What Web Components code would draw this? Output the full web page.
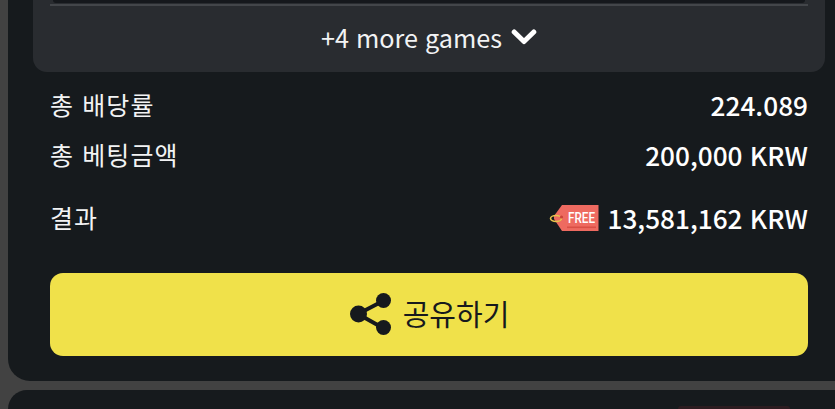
<!DOCTYPE html>
<html lang="ko">
<head>
<meta charset="utf-8">
<title>Bet slip</title>
<style>
  html, body { margin: 0; height: 409px; overflow: hidden; background: #424242; }
</style>
</head>
<body>
<template id="games-tpl">
  <style>
    :host { display: block; margin-right: 10px; background: #292c30; border-radius: 0 0 14px 14px; color: #f2f3f4; }
    .list { height: 3px; margin: 0 20px; background: #15181c; border-radius: 0 0 10px 10px; }
    .rule { height: 1.5px; margin: 1px 17px 0; background: #43464a; }
    .more { height: 64.5px; padding-bottom: 2px; display: flex; align-items: center; justify-content: center; gap: 9px; font: 400 25.2px/1 "Noto Sans CJK KR", sans-serif; }
    svg { width: 26px; height: 18px; display: block; margin-top: -2px; }
  </style>
  <div class="list"></div>
  <div class="rule"></div>
  <div class="more"><slot></slot>
    <svg viewBox="0 0 26 18"><path d="M3.2 4 L13 13.5 L22.8 4" fill="none" stroke="#fff" stroke-width="5" stroke-linecap="round" stroke-linejoin="round"/></svg>
  </div>
</template>

<template id="row-tpl">
  <style>
    :host { display: flex; justify-content: space-between; align-items: center; height: 50px; padding: 0 27px 0 17px; color: #f2f3f4; }
    .label { font: 400 25px/1 "Noto Sans CJK KR", sans-serif; letter-spacing: 1.1px; padding-bottom: 2px; }
    .value { display: flex; align-items: center; gap: 8px; font: 500 26.2px/1 "Noto Sans CJK KR", sans-serif; color: #fff; }
  </style>
  <span class="label"><slot name="label"></slot></span>
  <span class="value"><slot></slot></span>
</template>

<template id="tag-tpl">
  <style>
    :host { display: block; width: 50px; height: 26px; }
    svg { display: block; overflow: visible; }
    text { font: 500 14px "Roboto", sans-serif; fill: #fff; }
  </style>
  <svg width="50" height="26" viewBox="0 0 50 26">
    <path d="M13 0 H49.5 V26 H13 L5 14 V11 Z" fill="#ee6a60"/>
    <ellipse cx="7" cy="13.5" rx="5.5" ry="3" fill="none" stroke="#e8c34c" stroke-width="1.6"/>
    <circle cx="12.5" cy="12" r="1.6" fill="#c9443b"/>
    <rect x="18" y="21.5" width="29" height="1.6" fill="#d94f45"/>
    <text x="19" y="18" textLength="27" lengthAdjust="spacingAndGlyphs">FREE</text>
  </svg>
</template>

<template id="share-tpl">
  <style>
    :host { display: flex; align-items: center; justify-content: center; gap: 10px; height: 83px; padding-bottom: 2px; box-sizing: border-box; margin: 0 27px 0 17px; background: #f0e14a; border-radius: 13px; color: #16191d; font: 400 29px/1 "Noto Sans CJK KR", sans-serif; }
    svg { width: 44px; height: 44px; display: block; }
  </style>
  <svg viewBox="0 0 44 44">
    <path d="M9 22 L34 9 M9 22 L34 36" stroke="#16191d" stroke-width="4" fill="none"/>
    <circle cx="9.5" cy="22" r="8.5" fill="#16191d"/>
    <circle cx="34.5" cy="8.5" r="7.5" fill="#16191d"/>
    <circle cx="34.5" cy="35.5" r="7.5" fill="#16191d"/>
  </svg>
  <slot></slot>
</template>

<template id="card-tpl">
  <style>
    :host { display: block; margin-left: 8px; background: #161a1d; border-radius: 0 0 0 22px; height: 381px; padding-left: 25px; box-sizing: border-box; }
  </style>
  <slot></slot>
</template>

<template id="next-tpl">
  <style>
    :host { display: block; margin: 9px 0 0 8px; height: 19px; background: #161a1d; border-radius: 22px 0 0 0; overflow: hidden; }
    .tab { width: 112px; height: 3px; margin: 16px 0 0 670px; background: #2c1c20; border-radius: 8px 8px 0 0; }
  </style>
  <div class="tab"></div>
</template>

<bet-card>
  <games-box>+4 more games</games-box>
  <bet-row style="margin-top:8px"><span slot="label">총 배당률</span>224.089</bet-row>
  <bet-row><span slot="label">총 베팅금액</span>200,000 KRW</bet-row>
  <bet-row style="margin-top:13px"><span slot="label">결과</span><free-tag></free-tag>13,581,162 KRW</bet-row>
  <share-button style="margin-top:30px">공유하기</share-button>
</bet-card>
<next-card></next-card>

<script>
  // every element just clones its template into an open shadow root
  const simple = {
    'bet-card': 'card-tpl',
    'games-box': 'games-tpl',
    'bet-row': 'row-tpl',
    'free-tag': 'tag-tpl',
    'share-button': 'share-tpl',
    'next-card': 'next-tpl'
  };

  Object.entries(simple).forEach(([name, tpl]) => {
    customElements.define(name, class extends HTMLElement {
      constructor() {
        super();
        const shadow = this.attachShadow({ mode: 'open' });
        shadow.appendChild(document.getElementById(tpl).content.cloneNode(true));
      }
    });
  });
</script>
</body>
</html>
